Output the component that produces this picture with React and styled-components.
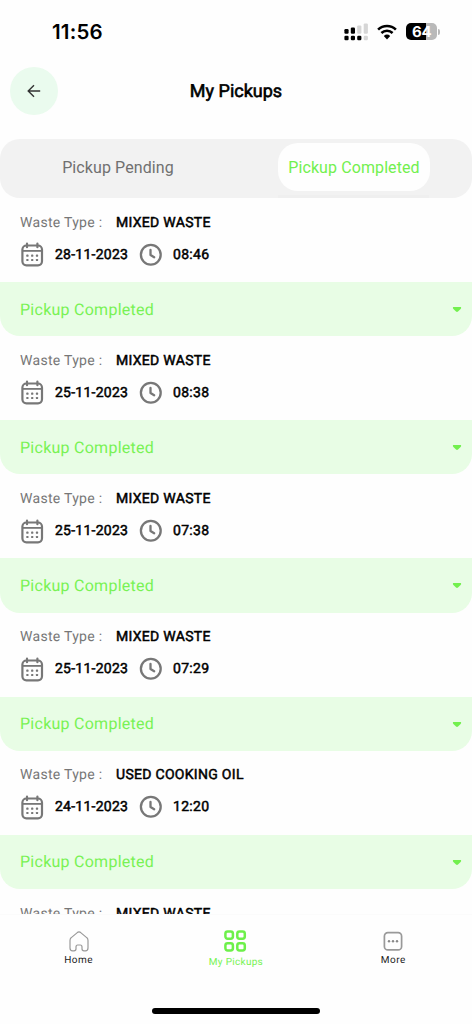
import React from 'react'
import styled, { createGlobalStyle } from 'styled-components'

const GlobalStyle = createGlobalStyle`
  * {
    box-sizing: border-box;
  }
  body {
    margin: 0;
    background: #fefefe;
    font-family: Roboto, 'Liberation Sans', sans-serif;
    text-rendering: geometricPrecision;
  }
`

const Screen = styled.div`
  width: 472px;
  height: 1024px;
  display: flex;
  flex-direction: column;
  overflow: hidden;
  background: #fefefe;
`

const StatusBar = styled.div`
  flex: none;
  height: 63px;
  padding: 0 32px 0 52px;
  display: flex;
  align-items: center;
  justify-content: space-between;
`

const Clock = styled.span`
  font-family: Inter, sans-serif;
  font-size: 20.5px;
  font-weight: 600;
  letter-spacing: 0.2px;
  color: #000;
`

const StatusIcons = styled.div`
  display: flex;
  align-items: center;
  gap: 9px;
`

const Header = styled.header`
  flex: none;
  height: 75.5px;
  padding: 4px 10px 0;
  display: grid;
  grid-template-columns: 48px 1fr 48px;
  align-items: start;
`

const BackButton = styled.button`
  width: 48px;
  height: 48px;
  padding: 0;
  border: none;
  border-radius: 50%;
  background: #eafbee;
  display: flex;
  align-items: center;
  justify-content: center;
`

const Title = styled.h1`
  margin: 0;
  line-height: 50px;
  font-size: 18px;
  font-weight: 400;
  letter-spacing: 0;
  text-align: center;
  color: #000;
  -webkit-text-stroke: 0.6px #000;
`

const Tabs = styled.div`
  flex: none;
  height: 59.5px;
  padding-top: 4.5px;
  border-radius: 20px;
  background: linear-gradient(#efefef, #efefef) no-repeat 278px 56px / 151px 3px #f2f2f2;
  display: grid;
  grid-template-columns: 1fr 1fr;
  justify-items: center;
  align-items: start;
`

const Tab = styled.button`
  width: 152px;
  height: 47.5px;
  padding: 1px 0 0;
  border: none;
  border-radius: 20px;
  background: ${props => (props.$active ? '#fefefe' : 'transparent')};
  color: ${props => (props.$active ? '#72f04e' : '#707070')};
  font-family: inherit;
  font-size: 16px;
  letter-spacing: 0.1px;
  white-space: nowrap;
`

const List = styled.main`
  flex: 1;
  min-height: 0;
  overflow: hidden;
`

const Card = styled.section`
  height: 138.2px;
  display: flex;
  flex-direction: column;
`

const CardBody = styled.div`
  flex: 1;
  padding: 14.2px 20px 0;
`

const Row = styled.div`
  height: ${props => props.$height};
  display: flex;
  align-items: center;
`

const Label = styled.span`
  width: 96px;
  font-size: 14px;
  letter-spacing: 0.29px;
  color: #777;
`

const Value = styled.span`
  width: ${props => props.$width || 'auto'};
  margin-left: ${props => props.$gap || '0'};
  font-size: 14px;
  letter-spacing: ${props => props.$spacing || '0.3px'};
  white-space: nowrap;
  color: #000;
  -webkit-text-stroke: 0.5px #000;
`

const Status = styled.div`
  height: 54.2px;
  padding: 0 10px 0 20px;
  border-radius: 0 0 20px 20px;
  background: #e8fde5;
  display: flex;
  align-items: center;
  justify-content: space-between;
  font-size: 16px;
  letter-spacing: 0.26px;
  color: #78f254;
`

const BottomNav = styled.nav`
  flex: none;
  height: 110px;
  display: flex;
  flex-direction: column;
  background: #fefefe;
  border-top: 1px solid #fbfbfb;
`

const NavItems = styled.div`
  height: 95px;
  display: grid;
  grid-template-columns: repeat(3, 157.3px);
`

const NavItem = styled.div`
  padding-top: ${props => (props.$active ? '15px' : '16px')};
  display: flex;
  flex-direction: column;
  align-items: center;
  gap: ${props => (props.$active ? '5px' : '3px')};
  font-size: 10px;
  line-height: 12px;
  letter-spacing: ${props => (props.$active ? '0.3px' : '0.45px')};
  color: ${props => (props.$active ? '#78f254' : '#222')};
`

const HomeIndicator = styled.div`
  width: 168px;
  height: 6px;
  margin: -2px auto 0;
  border-radius: 3px;
  background: #000;
`

const SignalIcon = () => (
  <svg width="24" height="18" viewBox="0 0 24 18">
    <g fill="#000">
      <rect x="0.4" y="6" width="4.2" height="4.8" rx="1.2" />
      <rect x="6.8" y="4.5" width="4.2" height="6.3" rx="1.2" />
      <rect x="0.4" y="12.8" width="4.2" height="4.4" rx="1.2" />
      <rect x="6.8" y="12.8" width="4.2" height="4.4" rx="1.2" />
      <rect x="13.2" y="12.8" width="4.2" height="4.4" rx="1.2" />
    </g>
    <g fill="#d6d6d6">
      <rect x="13.2" y="2.4" width="4.2" height="8.4" rx="1.2" />
      <rect x="19.7" y="0.4" width="4.2" height="10.4" rx="1.2" />
      <rect x="19.7" y="12.8" width="4.2" height="4.4" rx="1.2" />
    </g>
  </svg>
)

const WifiIcon = () => (
  <svg width="20" height="16" viewBox="0 0 20 16" fill="none" stroke="#000">
    <path d="M1.1 5.6 A12.7 12.7 0 0 1 18.9 5.6" strokeWidth="2.6" />
    <path d="M4.4 9 A8 8 0 0 1 15.6 9" strokeWidth="2.5" />
    <path d="M10 15.4 L6.8 12.1 A4.7 4.7 0 0 1 13.2 12.1 Z" fill="#000" stroke="none" />
  </svg>
)

const Battery = styled.div`
  display: flex;
  align-items: center;
  gap: 1px;
`

const BatteryBody = styled.div`
  width: 31px;
  height: 17px;
  border-radius: 5px;
  background: linear-gradient(90deg, #000 64%, #b9b9b9 64%);
  color: #fff;
  font-family: Inter, sans-serif;
  font-size: 15px;
  font-weight: 700;
  letter-spacing: -0.2px;
  line-height: 18px;
  text-align: center;
`

const BatteryTip = styled.div`
  width: 1.8px;
  height: 6px;
  border-radius: 0 2px 2px 0;
  background: #b9b9b9;
`

const ArrowIcon = () => (
  <svg width="14" height="14" viewBox="0 0 14 14" fill="none" stroke="#333" strokeWidth="1.4">
    <path d="M13.2 7 H1.5 M7 1.2 L1.2 7 L7 12.8" />
  </svg>
)

const CalendarIcon = () => (
  <svg width="24" height="25" viewBox="0 0 24 25" fill="none" stroke="#777" strokeWidth="2.2">
    <rect x="2.4" y="3.5" width="19.6" height="19.8" rx="4" />
    <path d="M2.4 8.9 H22" strokeWidth="1.8" />
    <path d="M7 1.5 V5.2 M17.4 1.5 V5.2" strokeLinecap="round" />
    <g fill="#777" stroke="none">
      {[6.3, 11.1, 15.9].map(x => (
        <React.Fragment key={x}>
          <rect x={x} y="12.6" width="2.2" height="2.2" rx="0.6" />
          <rect x={x} y="16.9" width="2.2" height="2.2" rx="0.6" />
        </React.Fragment>
      ))}
    </g>
  </svg>
)

const ClockIcon = () => (
  <svg width="24" height="24" viewBox="0 0 24 24" fill="none" stroke="#777" strokeWidth="2.3">
    <circle cx="11.8" cy="11.7" r="9.9" />
    <path d="M11.5 7 V12 L15.2 14.2" strokeLinecap="round" strokeLinejoin="round" />
  </svg>
)

const CaretIcon = () => (
  <svg width="10" height="8" viewBox="0 0 10 8">
    <path d="M1.1 1.9 H8.9 Q9.6 2.7 8.6 3.9 L6 6.6 Q5 7.5 4 6.6 L1.4 3.9 Q0.4 2.7 1.1 1.9 Z" fill="#72f04e" />
  </svg>
)

const HomeIcon = () => (
  <svg width="20" height="21" viewBox="0 0 20 21" fill="none" stroke="#999" strokeWidth="1.2">
    <path d="M1 9.4 Q1 7.6 2.3 6.6 L8.3 1.6 Q10 0.3 11.7 1.6 L17.7 6.6 Q19 7.6 19 9.4 V17 Q19 19.8 16.4 19.8 H15 Q13 19.8 13 17.8 V16 Q13 14 11.3 14 H8.7 Q7 14 7 16 V17.8 Q7 19.8 5 19.8 H3.6 Q1 19.8 1 17 Z" />
  </svg>
)

const GridIcon = () => (
  <svg width="24" height="22" viewBox="0 0 24 22" fill="none" stroke="#6df04a" strokeWidth="2.5">
    <rect x="1.4" y="1.5" width="7.5" height="7.3" rx="2.2" />
    <rect x="13.3" y="1.5" width="7.5" height="7.3" rx="2.2" />
    <rect x="1.4" y="13.2" width="7.5" height="7.3" rx="2.2" />
    <rect x="13.3" y="13.2" width="7.5" height="7.3" rx="2.2" />
  </svg>
)

const MoreIcon = () => (
  <svg width="20" height="21" viewBox="0 0 20 21">
    <rect x="1.4" y="1.7" width="17.2" height="17.2" rx="3.5" fill="none" stroke="#999" strokeWidth="1.7" />
    <g fill="#888">
      <circle cx="6" cy="10.3" r="1.2" />
      <circle cx="10" cy="10.3" r="1.2" />
      <circle cx="14" cy="10.3" r="1.2" />
    </g>
  </svg>
)

const pickups = [
  { type: 'MIXED WASTE', date: '28-11-2023', time: '08:46' },
  { type: 'MIXED WASTE', date: '25-11-2023', time: '08:38' },
  { type: 'MIXED WASTE', date: '25-11-2023', time: '07:38' },
  { type: 'MIXED WASTE', date: '25-11-2023', time: '07:29' },
  { type: 'USED COOKING OIL', date: '24-11-2023', time: '12:20' },
  { type: 'MIXED WASTE', date: '24-11-2023', time: '12:16' }
]

const Pickup = props => (
  <Card>
    <CardBody>
      <Row $height="21px">
        <Label>Waste Type :</Label>
        <Value>{props.type}</Value>
      </Row>
      <Row $height="43px">
        <CalendarIcon />
        <Value $gap="11px" $width="84px" $spacing="0.25px">{props.date}</Value>
        <ClockIcon />
        <Value $gap="10px" $spacing="0.3px">{props.time}</Value>
      </Row>
    </CardBody>
    <Status>
      Pickup Completed
      <CaretIcon />
    </Status>
  </Card>
)

const App = () => (
  <>
    <GlobalStyle />
    <Screen>
      <StatusBar>
        <Clock>11:56</Clock>
        <StatusIcons>
          <SignalIcon />
          <WifiIcon />
          <Battery>
            <BatteryBody>64</BatteryBody>
            <BatteryTip />
          </Battery>
        </StatusIcons>
      </StatusBar>
      <Header>
        <BackButton aria-label="Back">
          <ArrowIcon />
        </BackButton>
        <Title>My Pickups</Title>
      </Header>
      <Tabs>
        <Tab>Pickup Pending</Tab>
        <Tab $active>Pickup Completed</Tab>
      </Tabs>
      <List>
        {pickups.map((pickup, i) => (
          <Pickup key={i} {...pickup} />
        ))}
      </List>
      <BottomNav>
        <NavItems>
          <NavItem>
            <HomeIcon />
            Home
          </NavItem>
          <NavItem $active>
            <GridIcon />
            My Pickups
          </NavItem>
          <NavItem>
            <MoreIcon />
            More
          </NavItem>
        </NavItems>
        <HomeIndicator />
      </BottomNav>
    </Screen>
  </>
)

export default App
